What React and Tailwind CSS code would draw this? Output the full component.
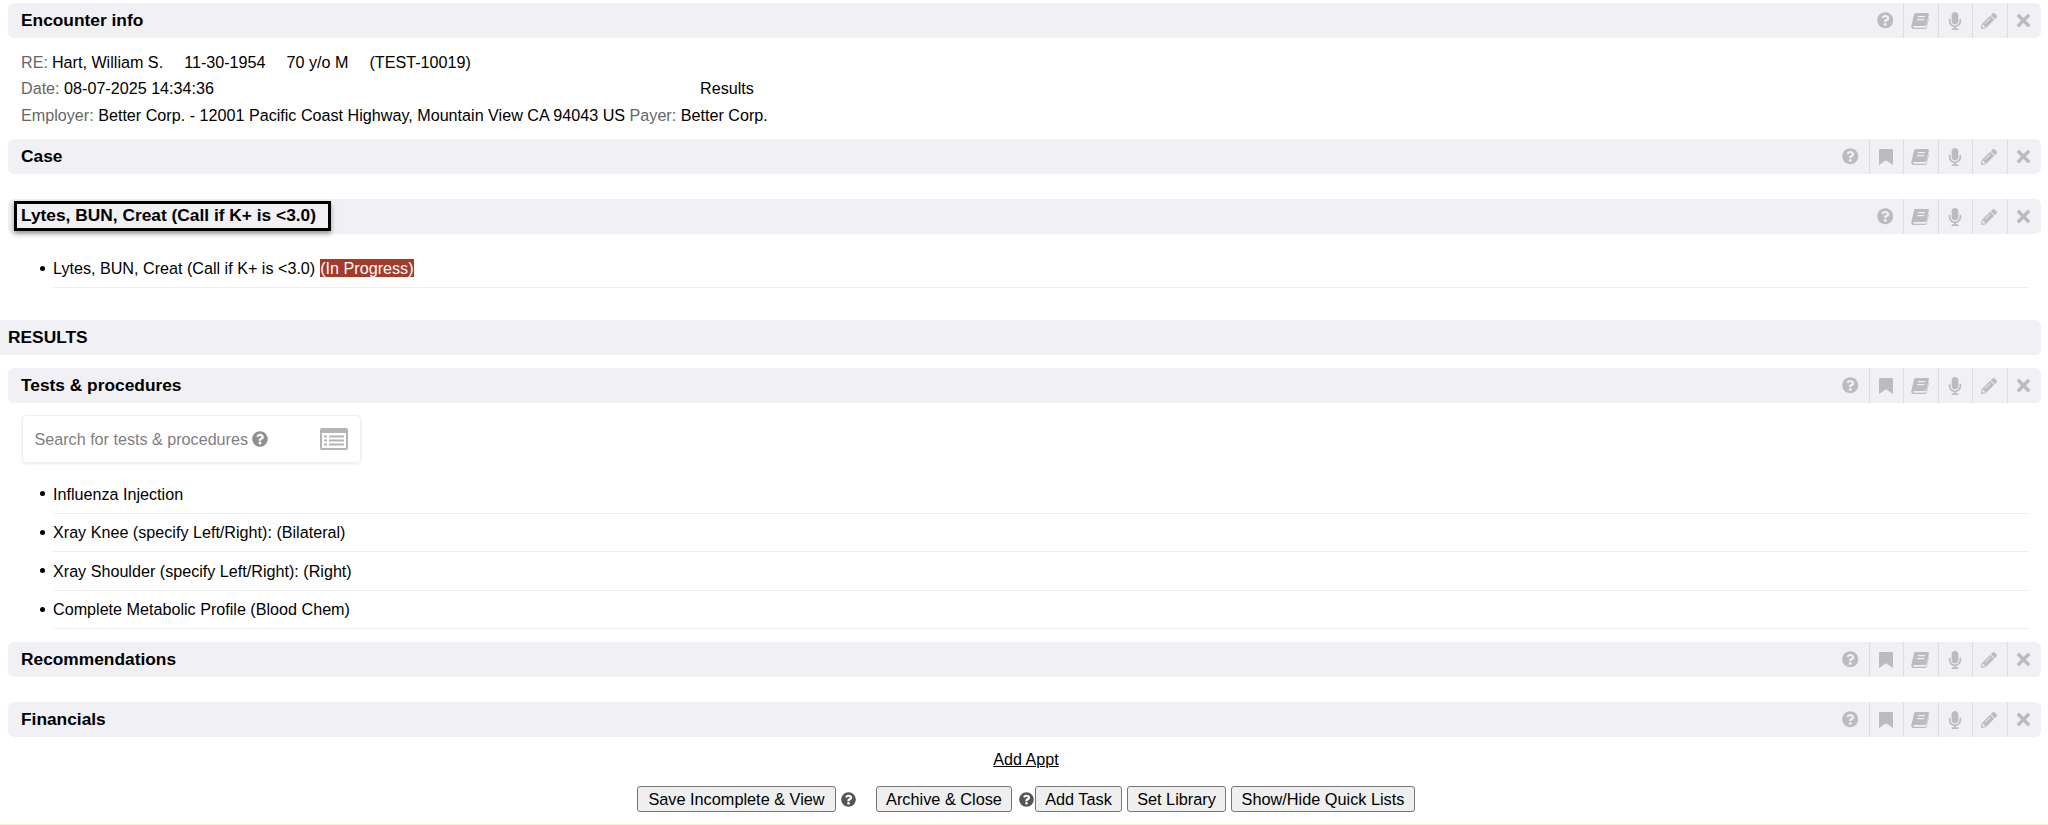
import React from "react";
import { FaQuestionCircle, FaMicrophone, FaPencilAlt, FaTimes } from "react-icons/fa";

function BookIcon() {
  return (
    <svg viewBox="0 0 18 16" className="w-[18px] h-4" fill="currentColor">
      <path fillRule="evenodd" d="M4.6 0 H16.8 c.8 0 1.3.6 1.1 1.4 L15.4 11.6 c-.2.9-.9 1.4-1.8 1.4 H3.4 c-.9 0-1.1.5-1 1 .1.4.5.7 1.1.7 H14 c.6 0 1-.3 1.2-.9 L17.6 4.6 l.4 .4 -2.2 9.2 c-.3 1.1-1.1 1.8-2.2 1.8 H3 C1.2 16 .1 14.8.3 13 L3 1.6 C3.2.7 3.8 0 4.6 0 Z M7 3 l-.3 1.2 h7.2 l.3-1.2 Z M6.3 6 l-.3 1.2 h7.2 l.3-1.2 Z" />
    </svg>
  );
}

function BookmarkIcon() {
  return (
    <svg viewBox="0 0 14 16" className="w-[14px] h-4" fill="currentColor">
      <path d="M1 0 H13 a1 1 0 0 1 1 1 V16 L7 11.2 0 16 V1 a1 1 0 0 1 1-1 Z" />
    </svg>
  );
}

function ListAltIcon() {
  return (
    <svg viewBox="0 0 28 22" className="w-[28px] h-[22px]" fill="currentColor">
      <path fillRule="evenodd" d="M2 0 H26 a2 2 0 0 1 2 2 V20 a2 2 0 0 1-2 2 H2 a2 2 0 0 1-2-2 V2 a2 2 0 0 1 2-2 Z M2 5 V20 H26 V5 Z" />
      <rect x="4" y="7.5" width="3" height="2" />
      <rect x="4" y="11.5" width="3" height="2" />
      <rect x="4" y="15.5" width="3" height="2" />
      <rect x="9" y="7.5" width="15" height="2" />
      <rect x="9" y="11.5" width="15" height="2" />
      <rect x="9" y="15.5" width="15" height="2" />
    </svg>
  );
}

function Cell({ first, children }) {
  return (
    <div className={first ? "w-[34.5px] h-full pr-[1.5px] flex items-center justify-center" : "w-[34.5px] h-full pr-[1.5px] flex items-center justify-center border-l border-[#dcdcdc]"}>
      {children}
    </div>
  );
}

function Bar({ title, bookmark, focus }) {
  return (
    <div className="h-[35px] rounded-md bg-[#f0f0f5] flex items-center justify-between text-[#bcbcbc]">
      {focus ? (
        <div className="ml-[9px] mb-[1px] h-[24px] pl-1 pr-3 flex items-center font-bold text-[17.33px] text-black outline-[3px] outline-solid outline-black shadow-[0_3px_5px_3px_rgba(0,0,0,0.35)]">
          {title}
        </div>
      ) : (
        <div className="ml-[13px] font-bold text-[17.33px] text-black">{title}</div>
      )}
      <div className="flex items-center h-full">
        <Cell first><FaQuestionCircle size={16.5} /></Cell>
        {bookmark && <Cell><BookmarkIcon /></Cell>}
        <Cell><BookIcon /></Cell>
        <Cell><FaMicrophone size={18} /></Cell>
        <Cell><FaPencilAlt size={16} /></Cell>
        <Cell><FaTimes size={19} /></Cell>
      </div>
    </div>
  );
}

function Item({ children }) {
  return (
    <div className="ml-[45px] mr-[13px] h-[38.5px] relative flex items-center border-b border-[#eeeeee]">
      <span className="absolute left-[-13px] w-[5px] h-[5px] rounded-full bg-black" />
      {children}
    </div>
  );
}

const Lbl = ({ children }) => <span className="text-[#666666]">{children}</span>;

function Btn({ w, children }) {
  return (
    <button className={w + " h-[26px] pb-[2px] bg-[#efefef] border border-[#767676] rounded-[3px] text-[16.3px] text-black whitespace-nowrap"}>
      {children}
    </button>
  );
}

export default function App() {
  return (
    <div className="w-[2048px] h-[825px] overflow-hidden bg-white text-black text-[16.15px] pt-[3px] font-['Liberation_Sans',Arial,sans-serif] flex flex-col">
      <div className="ml-2 mr-[7px]">
        <Bar title="Encounter info" />
        <div className="ml-[13px] mt-[11px] flex flex-col">
          <div className="h-[26px] flex items-center">
            <Lbl>RE:</Lbl>
            <span className="ml-1">Hart, William S.</span>
            <span className="ml-[21px]">11-30-1954</span>
            <span className="ml-[21px]">70 y/o M</span>
            <span className="ml-[21px]">(TEST-10019)</span>
          </div>
          <div className="h-[26.5px] flex items-center">
            <div className="w-[679px]">
              <Lbl>Date:</Lbl> 08-07-2025 14:34:36
            </div>
            <div>Results</div>
          </div>
          <div className="h-[27.5px] flex items-center whitespace-pre">
            <Lbl>Employer:</Lbl> Better Corp. - 12001 Pacific Coast Highway, Mountain View CA 94043 US <Lbl>Payer:</Lbl> Better Corp.
          </div>
        </div>
        <div className="mt-[10px]"><Bar title="Case" bookmark /></div>
        <div className="mt-[25px]"><Bar title="Lytes, BUN, Creat (Call if K+ is <3.0)" focus /></div>
        <div className="mt-[15.5px]">
          <Item>
            <span>Lytes, BUN, Creat (Call if K+ is &lt;3.0)</span>
            <span className="ml-[5px] bg-[#a5392a] text-white h-[18px] leading-[18px]">(In Progress)</span>
          </Item>
        </div>
      </div>
      <div className="mt-[32px] mr-[7px] h-[35px] bg-[#f0f0f5] rounded-r-md flex items-center pl-2 font-bold text-[17.33px]">RESULTS</div>
      <div className="ml-2 mr-[7px] mt-[13px]">
        <Bar title="Tests & procedures" bookmark />
        <div className="ml-[13.5px] mt-[12px] w-[339px] h-[48px] rounded border border-[#efefef] shadow-[0_1px_3px_rgba(0,0,0,0.08)] flex items-center justify-between pl-3 pr-[12px] text-[#808080]">
          <div className="flex items-center gap-1">
            <span>Search for tests &amp; procedures</span>
            <FaQuestionCircle size={16} className="text-[#909090]" />
          </div>
          <span className="text-[#b4b4b4]"><ListAltIcon /></span>
        </div>
        <div className="mt-[12px]">
          <Item>Influenza Injection</Item>
          <Item>Xray Knee (specify Left/Right): (Bilateral)</Item>
          <Item>Xray Shoulder (specify Left/Right): (Right)</Item>
          <Item>Complete Metabolic Profile (Blood Chem)</Item>
        </div>
        <div className="mt-[13px]"><Bar title="Recommendations" bookmark /></div>
        <div className="mt-[25px]"><Bar title="Financials" bookmark /></div>
      </div>
      <div className="mt-[12px] ml-[4px] text-center underline h-[20px] leading-[20px]">Add Appt</div>
      <div className="mt-[17px] flex justify-center items-center ml-[4px]">
        <Btn w="w-[199px]">Save Incomplete &amp; View</Btn>
        <FaQuestionCircle size={15} className="ml-[4.5px] text-[#555555]" />
        <div className="ml-[20.5px]"><Btn w="w-[136px]">Archive &amp; Close</Btn></div>
        <FaQuestionCircle size={15} className="ml-[6.5px] text-[#555555]" />
        <div className="ml-[1.5px]"><Btn w="w-[87px]">Add Task</Btn></div>
        <div className="ml-[5px]"><Btn w="w-[99px]">Set Library</Btn></div>
        <div className="ml-[5px]"><Btn w="w-[184px]">Show/Hide Quick Lists</Btn></div>
      </div>
      <div className="mt-auto h-[1px] bg-[#f5efdc]" />
    </div>
  );
}
